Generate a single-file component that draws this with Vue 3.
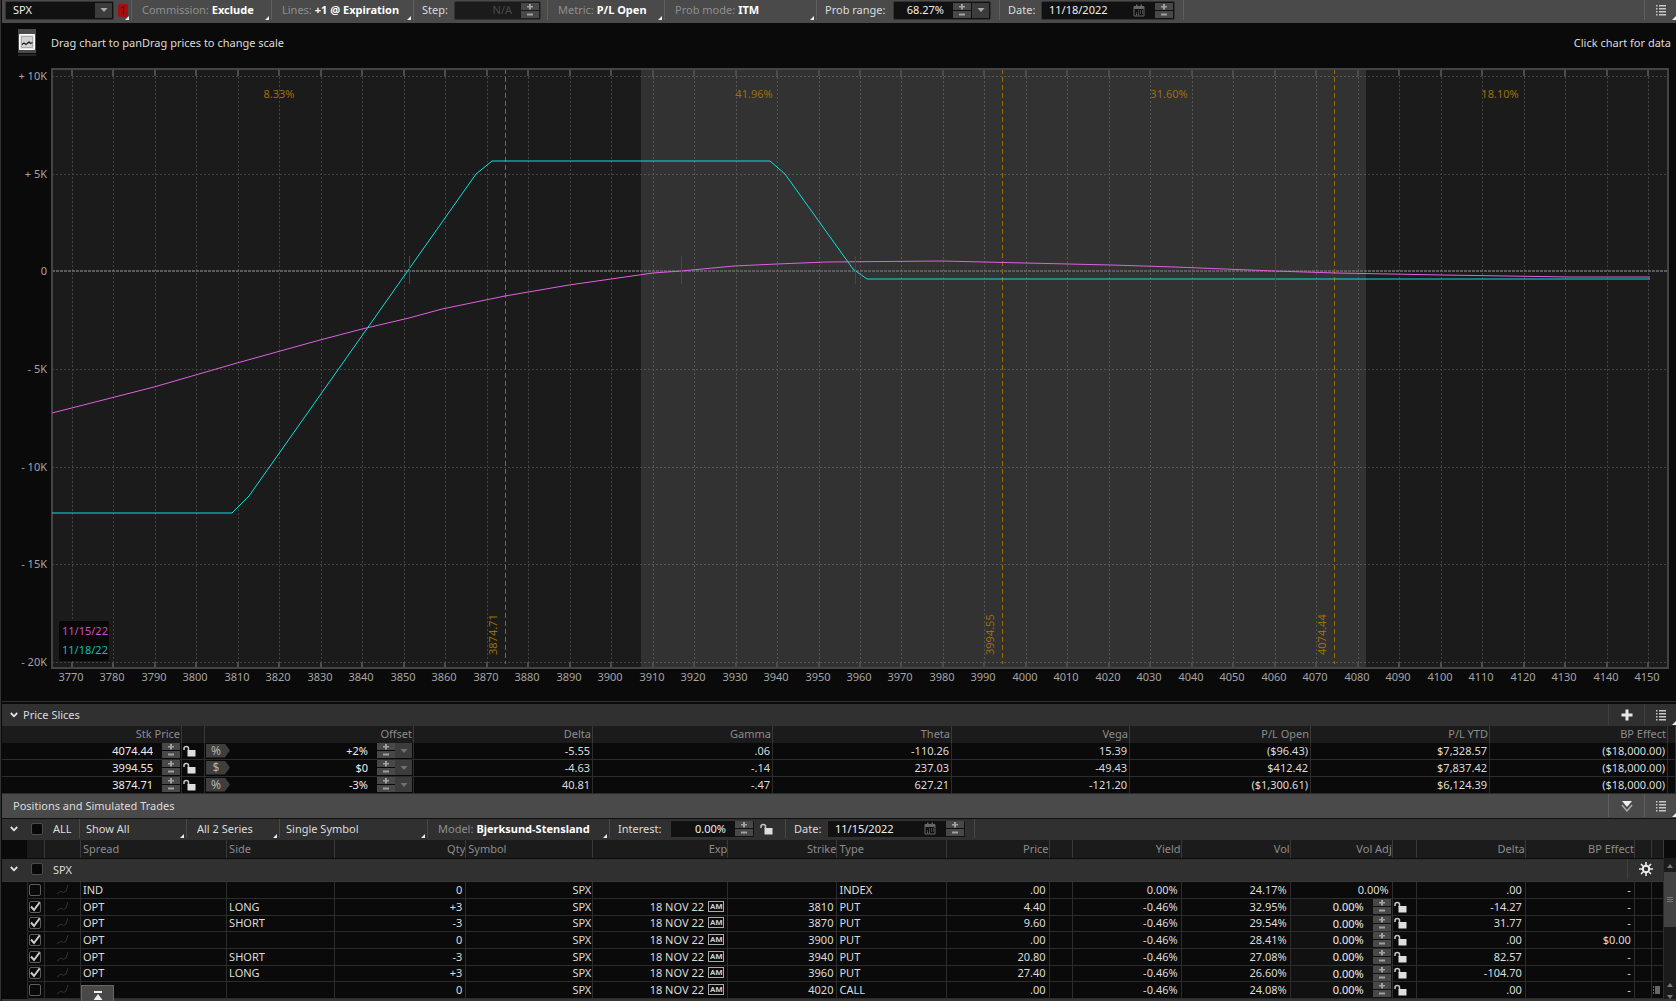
<script setup>
import { computed, onBeforeUnmount, onMounted, ref } from 'vue'

const chart = ref(null)
const size = ref({ w: 1674, h: 637 })
let observer

onMounted(() => {
  const measure = () => {
    const box = chart.value.getBoundingClientRect()
    size.value = { w: Math.round(box.width), h: Math.round(box.height) }
  }
  observer = new ResizeObserver(measure)
  observer.observe(chart.value)
  measure()
})
onBeforeUnmount(() => observer?.disconnect())

const plot = computed(() => ({
  left: 50,
  right: size.value.w - 8,
  top: 6,
  bottom: size.value.h - 32,
}))

const minPrice = 3765.2
const priceSpan = 389.6
const x = (price) => {
  const p = plot.value
  return Math.round(p.left + ((price - minPrice) / priceSpan) * (p.right - p.left))
}
const y = (value) => {
  const p = plot.value
  const top = p.top + 7
  const bottom = p.bottom - 6
  return Math.round(top + ((10000 - value) / 30000) * (bottom - top))
}
const path = (points) => points.map(([p, v]) => `${x(p)},${y(v)}`).join(' ')

const prices = Array.from({ length: 39 }, (_, i) => 3770 + i * 10)
const levels = [
  [10000, '+ 10K'], [5000, '+ 5K'], [0, '0'], [-5000, '- 5K'],
  [-10000, '- 10K'], [-15000, '- 15K'], [-20000, '- 20K'],
]
const expiration = [
  [3765.2, -12385], [3808.6, -12385], [3812.7, -11515], [3867.5, 4990], [3871.3, 5630],
  [3938.4, 5630], [3942, 4965], [3957.2, 460], [3958.4, 100], [3961.6, -410], [4150.5, -410],
]
const today = [
  [3765.2, -7267], [3789.8, -5900], [3809.9, -4700], [3829.8, -3520], [3839.9, -2940],
  [3851.3, -2380], [3859.3, -1930], [3874.5, -1240], [3889.9, -710], [3900, -390],
  [3910.2, -110], [3916.9, 20], [3929.7, 280], [3940, 370], [3951.9, 500], [3980, 510],
  [3989.6, 460], [4020.6, 330], [4036, 215], [4059.8, 30], [4074.7, -70], [4100.5, -180],
  [4131.4, -300], [4150.5, -300],
]
const breakevens = [3851.3, 3916.9, 3958.9, 4060]
const slicesAt = [3874.71, 3994.55, 4074.44]
const odds = [[3820, '8.33%'], [3934.4, '41.96%'], [4034.4, '31.60%'], [4114.4, '18.10%']]

const slices = [
  { price: '4074.44', unit: '%', offset: '+2%', cells: ['-5.55', '.06', '-110.26', '15.39', '($96.43)', '$7,328.57', '($18,000.00)'] },
  { price: '3994.55', unit: '$', offset: '$0', cells: ['-4.63', '-.14', '237.03', '-49.43', '$412.42', '$7,837.42', '($18,000.00)'] },
  { price: '3874.71', unit: '%', offset: '-3%', cells: ['40.81', '-.47', '627.21', '-121.20', '($1,300.61)', '$6,124.39', '($18,000.00)'] },
]
const sliceHeads = ['Delta', 'Gamma', 'Theta', 'Vega', 'P/L Open', 'P/L YTD', 'BP Effect']
const sliceCols = [180, 23, 209, 179, 180, 179, 178, 181, 179, 178, 8]

const posCols = [26, 17, 36, 146, 108, 131, 127, 135, 109, 109, 103, 23, 109, 109, 102, 24, 109, 109, 17, 12]
const trades = [
  { on: false, kind: 'IND', side: '', qty: '0', exp: '', strike: '', type: 'INDEX', price: '.00', yld: '0.00%', vol: '24.17%', delta: '.00', bp: '-' },
  { on: true, kind: 'OPT', side: 'LONG', qty: '+3', exp: '18 NOV 22', strike: '3810', type: 'PUT', price: '4.40', yld: '-0.46%', vol: '32.95%', delta: '-14.27', bp: '-' },
  { on: true, kind: 'OPT', side: 'SHORT', qty: '-3', exp: '18 NOV 22', strike: '3870', type: 'PUT', price: '9.60', yld: '-0.46%', vol: '29.54%', delta: '31.77', bp: '-' },
  { on: true, kind: 'OPT', side: '', qty: '0', exp: '18 NOV 22', strike: '3900', type: 'PUT', price: '.00', yld: '-0.46%', vol: '28.41%', delta: '.00', bp: '$0.00' },
  { on: true, kind: 'OPT', side: 'SHORT', qty: '-3', exp: '18 NOV 22', strike: '3940', type: 'PUT', price: '20.80', yld: '-0.46%', vol: '27.08%', delta: '82.57', bp: '-' },
  { on: true, kind: 'OPT', side: 'LONG', qty: '+3', exp: '18 NOV 22', strike: '3960', type: 'PUT', price: '27.40', yld: '-0.46%', vol: '26.60%', delta: '-104.70', bp: '-' },
  { on: false, kind: '', side: '', qty: '0', exp: '18 NOV 22', strike: '4020', type: 'CALL', price: '.00', yld: '-0.46%', vol: '24.08%', delta: '.00', bp: '-' },
]
</script>

<template>
  <div class="app">
    <svg class="defs" aria-hidden="true">
      <symbol id="i-plus" viewBox="0 0 8 7"><path d="M3 1h2v2h2v1.500H5v2H3v-2H1V3h2z" fill="#a0a0a0" /></symbol>
      <symbol id="i-minus" viewBox="0 0 8 7"><path d="M1 2.500h6v2H1z" fill="#a0a0a0" /></symbol>
      <symbol id="i-down" viewBox="0 0 8 6"><path d="M0.500 1h7L4 5z" fill="currentColor" /></symbol>
      <symbol id="i-lock" viewBox="0 0 14 12">
        <path d="M1 5V3.500C1 0.800 5.500 0.800 5.500 3.500V6" fill="none" stroke="#c8c8c8" stroke-width="1.500" />
        <path d="M4.500 5h8v6.500h-8z" fill="#dedede" />
      </symbol>
      <symbol id="i-cal" viewBox="0 0 12 13">
        <path d="M1 2.500h10v9.500H1z" fill="none" stroke="#666" />
        <path d="M1 2h10v3H1zM3 0.500h1.500v2H3zM7.500 0.500H9v2H7.500z" fill="#666" />
        <path d="M5 6.500h1v1H5zM7 6.500h1v1H7zM9 6.500h1v1H9zM3 8.500h1v1H3zM5 8.500h1v1H5zM7 8.500h1v1H7zM9 8.500h1v1H9zM3 10.300h1v1H3zM5 10.300h1v1H5z" fill="#777" />
      </symbol>
      <symbol id="i-list" viewBox="0 0 12 12">
        <path d="M1 1h1.500v1.500H1zM1 4h1.500v1.500H1zM1 7h1.500v1.500H1zM1 10h1.500v1.500H1zM4 1h7v1.500H4zM4 4h7v1.500H4zM4 7h7v1.500H4zM4 10h7v1.500H4z" fill="#c8c8c8" />
      </symbol>
      <symbol id="i-chev" viewBox="0 0 8 6"><path d="M0.800 1L4 4.300L7.200 1" fill="none" stroke="#e4e4e4" stroke-width="1.800" /></symbol>
      <symbol id="i-spark" viewBox="0 0 14 12"><path d="M1 10l4-3 2.500 1.500L10 7l2-6" fill="none" stroke="#333" /></symbol>
    </svg>

    <header class="bar top">
      <div class="cell c-symbol">
        <span class="field symbol">
          <input type="text" value="SPX" aria-label="Symbol">
          <button class="drop" aria-label="Symbols"><svg width="8" height="6"><use href="#i-down" /></svg></button>
        </span>
        <button class="badge">1</button>
        <i class="corner"></i>
      </div>
      <div class="cell menu w140"><label for="commission">Commission:</label><select id="commission" class="strong"><option>Exclude</option></select><i class="corner"></i></div>
      <div class="cell menu w142"><label for="lines">Lines:</label><select id="lines" class="strong"><option>+1 @ Expiration</option></select><i class="corner"></i></div>
      <div class="cell w134">
        <label for="step">Step:</label>
        <span class="field off step"><input id="step" type="text" value="N/A" disabled>
          <span class="spin"><button aria-label="Step up" disabled><svg><use href="#i-plus" /></svg></button><button aria-label="Step down" disabled><svg><use href="#i-minus" /></svg></button></span>
        </span>
      </div>
      <div class="cell menu w117"><label for="metric">Metric:</label><select id="metric" class="strong"><option>P/L Open</option></select><i class="corner"></i></div>
      <div class="cell menu w152"><label for="probmode">Prob mode:</label><select id="probmode" class="strong"><option>ITM</option></select><i class="corner"></i></div>
      <div class="cell w183">
        <label for="range">Prob range:</label>
        <span class="field range"><input id="range" type="text" value="68.27%">
          <span class="spin"><button aria-label="Range up"><svg><use href="#i-plus" /></svg></button><button aria-label="Range down"><svg><use href="#i-minus" /></svg></button></span>
          <button class="drop" aria-label="Ranges"><svg width="8" height="6"><use href="#i-down" /></svg></button>
        </span>
      </div>
      <div class="cell w184">
        <label for="date1">Date:</label>
        <span class="field date"><input id="date1" type="text" value="11/18/2022">
          <svg class="cal" width="12" height="13"><use href="#i-cal" /></svg>
          <span class="spin"><button aria-label="Next day"><svg><use href="#i-plus" /></svg></button><button aria-label="Previous day"><svg><use href="#i-minus" /></svg></button></span>
        </span>
      </div>
      <span class="grow"></span>
      <button class="tool" aria-label="Chart options"><svg width="12" height="12"><use href="#i-list" /></svg><i class="corner"></i></button>
    </header>

    <div class="hint">
      <button class="snap" aria-label="Chart style">
        <svg width="18" height="27" viewBox="0 0 18 27">
          <path d="M0 0h18v24H0z" fill="#4a4a4a" /><path d="M0 25h18v2H0z" fill="#242424" />
          <path d="M1.500 5.500h15v15h-15z" fill="#e4e4e4" stroke="#fff" />
          <path d="M3.500 7.500h11v11h-11z" fill="#d2d2d2" stroke="#aaa" />
          <path d="M4 15.500l2-1.500 2 1.500 3-2.500 1.500 1.500 2-1" fill="none" stroke="#222" stroke-width="1.300" />
        </svg>
      </button>
      <span>Drag chart to panDrag prices to change scale</span>
      <span class="grow"></span>
      <span>Click chart for data</span>
    </div>

    <svg ref="chart" class="chart" role="img" aria-label="Profit and loss by underlying price">
      <rect :x="plot.left" :y="plot.top" :width="plot.right - plot.left" :height="plot.bottom - plot.top" fill="#1b1b1b" />
      <g class="grid">
        <line v-for="p in prices" :key="p" :x1="x(p)" :x2="x(p)" :y1="plot.top" :y2="plot.bottom" />
        <template v-for="[v] in levels" :key="v">
          <line v-if="v" :x1="plot.left" :x2="plot.right" :y1="y(v)" :y2="y(v)" />
        </template>
      </g>
      <rect :x="x(3907.2)" :y="plot.top" :width="x(4082) - x(3907.2)" :height="plot.bottom - plot.top" fill="#fff" fill-opacity="0.1" />
      <g class="ticks">
        <template v-for="p in prices" :key="p">
          <line :x1="x(p)" :x2="x(p)" :y1="plot.top" :y2="plot.top + 7" />
          <line :x1="x(p)" :x2="x(p)" :y1="plot.bottom - 6" :y2="plot.bottom" />
        </template>
      </g>
      <line class="zero" :x1="plot.left" :x2="plot.right" :y1="y(0)" :y2="y(0)" />
      <line v-for="s in slicesAt" :key="s" class="slice" :x1="x(s) - 1" :x2="x(s) - 1" :y1="plot.top" :y2="plot.bottom - 4" />
      <rect class="frame" :x="plot.left" :y="plot.top" :width="plot.right - plot.left" :height="plot.bottom - plot.top" />
      <polyline class="today" :points="path(today)" />
      <polyline class="expiration" :points="path(expiration)" />
      <line v-for="b in breakevens" :key="b" class="even" :x1="x(b)" :x2="x(b)" :y1="y(0) - 15" :y2="y(0) + 13" />
      <text v-for="[p, t] in odds" :key="t" class="gold mid" :x="x(p)" :y="plot.top + 29">{{ t }}</text>
      <text v-for="s in slicesAt" :key="s" class="gold" :transform="`translate(${x(s) - 9} ${plot.bottom - 13}) rotate(-90)`">{{ s.toFixed(2) }}</text>
      <text v-for="p in prices" :key="p" class="axis mid" :x="x(p) - 1" :y="plot.bottom + 13">{{ p }}</text>
      <text v-for="[v, t] in levels" :key="t" class="axis end" :x="plot.left - 5" :y="y(v) + 4">{{ t }}</text>
      <rect :x="plot.left + 7" :y="plot.bottom - 47" width="50" height="40" rx="2" fill="#080808" />
      <text :x="plot.left + 10" :y="plot.bottom - 33" fill="#c850c8">11/15/22</text>
      <text :x="plot.left + 10" :y="plot.bottom - 14" fill="#12b8b8">11/18/22</text>
    </svg>

    <section class="slices">
      <h2 class="bar dim">
        <button class="fold" aria-label="Collapse"><svg width="8" height="6"><use href="#i-chev" /></svg></button>Price Slices
        <span class="grow"></span>
        <button class="tool wide" aria-label="Add slice"><svg width="12" height="12"><path d="M4.500 0.500h3v4h4v3h-4v4h-3v-4h-4v-3h4z" fill="#e8e8e8" /></svg></button>
        <button class="tool" aria-label="Slice options"><svg width="12" height="12"><use href="#i-list" /></svg><i class="corner"></i></button>
      </h2>
      <table>
        <colgroup><col v-for="(w, i) in sliceCols" :key="i" :style="{ width: w + 'px' }"></colgroup>
        <thead>
          <tr><th>Stk Price</th><th></th><th>Offset</th><th v-for="t in sliceHeads" :key="t">{{ t }}</th><th></th></tr>
        </thead>
        <tbody>
          <tr v-for="s in slices" :key="s.price">
            <td class="edit">
              <span class="line"><input type="text" :value="s.price" aria-label="Stock price">
                <span class="spin"><button aria-label="Up"><svg><use href="#i-plus" /></svg></button><button aria-label="Down"><svg><use href="#i-minus" /></svg></button></span></span>
            </td>
            <td class="mini"><button class="lock" aria-label="Lock price"><svg width="14" height="12"><use href="#i-lock" /></svg></button></td>
            <td class="edit">
              <span class="line"><button class="tag">{{ s.unit }}</button><input type="text" :value="s.offset" aria-label="Offset">
                <span class="spin"><button aria-label="Up"><svg><use href="#i-plus" /></svg></button><button aria-label="Down"><svg><use href="#i-minus" /></svg></button></span>
                <button class="drop faint" aria-label="Offsets"><svg width="8" height="6"><use href="#i-down" /></svg></button></span>
            </td>
            <td v-for="(c, i) in s.cells" :key="i">{{ c }}</td>
            <td></td>
          </tr>
        </tbody>
      </table>
    </section>

    <section class="positions">
      <h2 class="bar lit">
        Positions and Simulated Trades
        <span class="grow"></span>
        <button class="tool wide" aria-label="Expand"><svg width="12" height="12"><path d="M1 1h10L6 7z" fill="#f0f0f0" /><path d="M1 5l5 6 5-6" fill="none" stroke="#aaa" stroke-width="1.500" /></svg></button>
        <button class="tool" aria-label="Position options"><svg width="12" height="12"><use href="#i-list" /></svg><i class="corner"></i></button>
      </h2>
      <div class="bar filters">
        <div class="cell w78"><button class="fold" aria-label="Collapse all"><svg width="8" height="6"><use href="#i-chev" /></svg></button><input id="all" type="checkbox" class="solid"><label for="all">ALL</label></div>
        <div class="cell menu near w107"><select aria-label="Show"><option>Show All</option></select><i class="corner"></i></div>
        <div class="cell menu w93"><select aria-label="Series"><option>All 2 Series</option></select><i class="corner"></i></div>
        <div class="cell menu near w148"><select aria-label="Grouping"><option>Single Symbol</option></select><i class="corner"></i></div>
        <div class="cell menu w182"><label for="model">Model:</label><select id="model" class="strong"><option>Bjerksund-Stensland</option></select><i class="corner"></i></div>
        <div class="cell w176">
          <label for="interest">Interest:</label>
          <span class="field interest"><input id="interest" type="text" value="0.00%">
            <span class="spin"><button aria-label="Interest up"><svg><use href="#i-plus" /></svg></button><button aria-label="Interest down"><svg><use href="#i-minus" /></svg></button></span>
          </span>
          <button class="lock" aria-label="Lock interest"><svg width="14" height="12"><use href="#i-lock" /></svg></button>
        </div>
        <div class="cell w189">
          <label for="date2">Date:</label>
          <span class="field date"><input id="date2" type="text" value="11/15/2022">
            <svg class="cal" width="12" height="13"><use href="#i-cal" /></svg>
            <span class="spin"><button aria-label="Next day"><svg><use href="#i-plus" /></svg></button><button aria-label="Previous day"><svg><use href="#i-minus" /></svg></button></span>
          </span>
        </div>
      </div>
      <div class="book">
        <table>
          <colgroup><col v-for="(w, i) in posCols" :key="i" :style="{ width: w + 'px' }"></colgroup>
          <thead>
            <tr>
              <th class="blank"></th><th></th><th></th><th class="l">Spread</th><th class="l">Side</th><th>Qty</th><th class="l">Symbol</th><th>Exp</th><th>Strike</th><th class="l">Type</th><th>Price</th><th></th><th>Yield</th><th>Vol</th><th>Vol Adj</th><th></th><th>Delta</th><th>BP Effect</th><th></th><th></th>
            </tr>
          </thead>
          <tbody>
            <tr class="group">
              <td colspan="20">
                <div class="line">
                  <button class="fold" aria-label="Collapse SPX"><svg width="8" height="6"><use href="#i-chev" /></svg></button><input id="spx" type="checkbox" class="solid"><label for="spx">SPX</label>
                  <span class="grow"></span>
                  <button class="tool" aria-label="Settings">
                    <svg width="14" height="14" viewBox="0 0 14 14"><circle cx="7" cy="7" r="3.200" fill="none" stroke="#ececec" stroke-width="2" /><path d="M7 0v3M7 11v3M0 7h3M11 7h3M2 2l2.200 2.200M9.800 9.800L12 12M12 2L9.800 4.200M4.200 9.800L2 12" stroke="#ececec" stroke-width="1.600" /></svg>
                  </button>
                </div>
              </td>
            </tr>
            <tr v-for="(t, i) in trades" :key="i" class="trade">
              <td class="blank"></td>
              <td class="mini"><input type="checkbox" :checked="t.on" aria-label="Include"></td>
              <td class="mini c"><svg width="14" height="12"><use href="#i-spark" /></svg></td>
              <td class="l">{{ t.kind }}</td>
              <td class="l">{{ t.side }}</td>
              <td>{{ t.qty }}</td>
              <td class="sym">SPX</td>
              <td><span class="line end">{{ t.exp }}<b v-if="t.exp" class="am">AM</b></span></td>
              <td>{{ t.strike }}</td>
              <td class="l">{{ t.type }}</td>
              <td>{{ t.price }}</td>
              <td></td>
              <td>{{ t.yld }}</td>
              <td>{{ t.vol }}</td>
              <td v-if="i === 0">0.00%</td>
              <td v-else class="edit adj">
                <span class="line"><input type="text" value="0.00%" aria-label="Volatility adjustment">
                  <span class="spin"><button aria-label="Up"><svg><use href="#i-plus" /></svg></button><button aria-label="Down"><svg><use href="#i-minus" /></svg></button></span></span>
              </td>
              <td class="mini"><button v-if="i" class="lock" aria-label="Lock volatility"><svg width="14" height="12"><use href="#i-lock" /></svg></button></td>
              <td>{{ t.delta }}</td>
              <td>{{ t.bp }}</td>
              <td></td>
              <td class="mini"><svg v-if="i === 6" width="8" height="8"><path d="M0 0h1v2H0zM0 3h1v2H0zM0 6h1v2H0zM2 0h5v8H2z" fill="#666" /></svg></td>
            </tr>
          </tbody>
        </table>
        <div class="scroll">
          <svg width="6" height="4"><path d="M0 4l3-4 3 4z" fill="#777" /></svg>
          <span class="thumb"><i></i><i></i><i></i></span>
          <span class="grow"></span>
          <svg width="6" height="4"><path d="M0 4l3-4 3 4z" fill="#777" /></svg>
          <svg width="6" height="4"><path d="M0 0l3 4 3-4z" fill="#777" /></svg>
        </div>
      </div>
      <div class="rim"></div>
      <button class="raise" aria-label="Raise panel"><svg width="10" height="10"><path d="M1 0h8v2H1zM5 3l4.500 6h-9z" fill="#eee" /></svg></button>
    </section>
  </div>
</template>

<style>
html,
body {
  background: #0a0a0a;
}
</style>

<style scoped>
.app {
  display: flex;
  flex-direction: column;
  height: 100vh;
  box-sizing: border-box;
  padding-left: 2px;
  overflow: hidden;
  background: #0a0a0a;
  color: #dcdcdc;
  font: 11px/16px "Noto Sans", "Open Sans", sans-serif;
  box-shadow: inset 1px 0 #333;
}
.defs { position: absolute; width: 0; height: 0; }
button, input, select {
  appearance: none;
  margin: 0;
  padding: 0;
  border: 0;
  border-radius: 0;
  background: none;
  color: inherit;
  font: inherit;
  min-width: 0;
}
button { display: flex; align-items: center; justify-content: center; flex: none; }
svg { display: block; flex: none; }
h2 { margin: 0; font: inherit; }
.grow { flex: 1; }

.bar { display: flex; align-items: stretch; flex: none; box-sizing: border-box; white-space: nowrap; }
.top { height: 23px; background: #4a4a4a; padding-bottom: 3px; }
.cell {
  position: relative;
  display: flex;
  align-items: center;
  flex: none;
  box-sizing: border-box;
  padding-left: 8px;
  border-right: 1px solid #5e5e5e;
}
.menu { padding-left: 10px; }
.near { padding-left: 6px; }
.menu label { color: #8e8e8e; }
.menu label + select { margin-left: 3px; }
.menu select { flex: 1; }
.strong { font-weight: 700; color: #fff; }
.c-symbol { width: 130px; padding-left: 3px; gap: 4px; }
.w78 { width: 78px; padding-left: 0; }
.w93 { width: 93px; }
.w107 { width: 107px; }
.w117 { width: 117px; }
.w134 { width: 134px; }
.w140 { width: 140px; }
.w142 { width: 142px; }
.w148 { width: 148px; }
.w152 { width: 152px; }
.w176 { width: 176px; }
.w182 { width: 182px; }
.w183 { width: 183px; }
.w184 { width: 184px; }
.w189 { width: 189px; }
.corner {
  position: absolute;
  right: 2px;
  bottom: 0;
  width: 4px;
  height: 4px;
  background: #eee;
  clip-path: polygon(100% 0, 100% 100%, 0 100%);
}
.field {
  display: flex;
  align-items: center;
  gap: 1px;
  box-sizing: border-box;
  height: 19px;
  padding: 0 1px;
  border: 1px solid #333;
  border-radius: 2px;
  background: #111;
  color: #eee;
}
.field input { flex: 1; width: 0; }
.symbol { width: 109px; }
.symbol input { padding-left: 6px; }
.off { background: #1b1b1b; color: #4a4a4a; }
.step { width: 87px; margin-left: auto; margin-right: 6px; }
.range { width: 98px; margin-left: auto; margin-right: 8px; }
.interest { width: 85px; margin-left: auto; }
.step input, .range input, .interest input { text-align: right; padding-right: 8px; }
.date { width: 134px; margin-left: auto; margin-right: 8px; }
.date input { padding-left: 6px; }
.date .cal { margin-right: 9px; }
.filters .date { width: 139px; }
.badge { width: 10px; height: 13px; border-radius: 2px; background: #a30f0f; color: #4a1010; }
.drop { width: 17px; height: 15px; background: #3c3c3c; color: #a8a8a8; }
.drop.faint { color: #707070; }
.spin { display: flex; flex-direction: column; flex: none; gap: 1px; width: 18px; }
.spin button { height: 7px; background: #484848; }
.spin svg { width: 8px; height: 7px; }
.tool {
  position: relative;
  width: 32px;
  border-left: 1px solid #5e5e5e;
}
.tool .corner { right: 0; }
.tool.wide { width: 36px; }
.lock { width: 14px; height: 12px; }

.hint { display: flex; align-items: center; flex: none; box-sizing: border-box; height: 40px; padding: 0 5px 1px 16px; }
.snap { margin-right: 15px; }

.chart { flex: 1 1 0; width: 100%; min-height: 200px; font-size: 11px; cursor: crosshair; }
.grid line { stroke: #434343; stroke-width: 1; stroke-dasharray: 2 2; shape-rendering: crispEdges; }
.ticks line { stroke: #4c4c4c; stroke-width: 2; shape-rendering: crispEdges; }
.zero { stroke: #5c5c5c; stroke-width: 2; stroke-dasharray: 3 1; shape-rendering: crispEdges; }
.frame { fill: none; stroke: #444; stroke-width: 2; }
.slice { stroke: #946a06; stroke-width: 1; stroke-dasharray: 5 3; shape-rendering: crispEdges; }
.today, .expiration { fill: none; stroke-width: 1; }
.today { stroke: #e060e0; }
.expiration { stroke: #14dcdc; }
.even { stroke: #e00; stroke-width: 1; shape-rendering: crispEdges; }
.gold { fill: #9c7004; }
.axis { fill: #a4a4a4; }
.mid { text-anchor: middle; }
.end { text-anchor: end; }

.slices { flex: none; margin-top: 1px; border-top: 1px solid #303030; padding-top: 2px; }
.dim { height: 22px; background: #303030; align-items: center; }
.lit { height: 24px; background: #4a4a4a; align-items: center; padding-left: 11px; }
.dim, .lit { padding-bottom: 1px; }
.bar > .tool { height: auto; align-self: stretch; }
.dim .tool, .group .tool { border-color: #404040; }
.fold { width: 21px; height: 16px; padding-left: 2px; box-sizing: border-box; }

table { width: 100%; table-layout: fixed; border-collapse: separate; border-spacing: 0; }
th, td {
  box-sizing: border-box;
  height: 17px;
  padding: 0 3px 2px;
  border-right: 1px solid #2c2c2c;
  text-align: right;
  font-weight: 400;
  line-height: 13px;
  white-space: nowrap;
  overflow: hidden;
}
th { padding: 0 0 2px; background: #1b1b1b; border-color: #383838; color: #8c8c8c; }
td { border-bottom: 1px solid #2c2c2c; }
.slices th { padding-right: 1px; }
.slices td { padding-right: 2px; }
th.l, td.l { text-align: left; padding-left: 2px; }
td.mini { padding: 0 1px 1px; }
td.c svg { margin: 0 auto; }
.line { display: flex; align-items: center; height: 15px; }
.line input[type="text"] { flex: 1; width: 0; height: 14px; text-align: right; padding-right: 9px; color: #ececec; }
td.edit { padding: 0 1px 1px; }
.slices td.edit { padding-right: 1px; }
.line.end { justify-content: flex-end; gap: 4px; height: 13px; }
.tag {
  width: 24px;
  height: 14px;
  padding-right: 4px;
  background: #3e3e3e;
  color: #b0b0b0;
  font-size: 12px;
  clip-path: polygon(0 0, 78% 0, 100% 50%, 78% 100%, 0 100%);
}

.positions { position: relative; flex: none; }
.filters { height: 22px; padding-bottom: 2px; border-top: 1px solid #111; background: #303030; }
.filters .cell { border-color: #484848; }
.filters .field { height: 18px; }
.filters .lock { margin: 0 11px 0 5px; }
input[type="checkbox"] {
  flex: none;
  display: block;
  box-sizing: border-box;
  width: 12px;
  height: 12px;
  border: 1px solid #5c5c5c;
  border-radius: 2px;
}
input[type="checkbox"]:checked {
  background: url("data:image/svg+xml,%3Csvg xmlns='http://www.w3.org/2000/svg' viewBox='0 0 12 12'%3E%3Cpath d='M2 5.500L5 9L11 1' fill='none' stroke='%23ccc' stroke-width='2'/%3E%3C/svg%3E") center / 12px 12px no-repeat;
}
input[type="checkbox"].solid { margin: 0 10px 0 8px; background: #080808; border-color: #4c4c4c; }
.book { display: flex; }
.book th { height: 18px; }
.book th.blank { background: #0a0a0a; border-color: #1b1b1b; }
.book td.blank { border-bottom-color: #0a0a0a; }
.group td { height: 24px; padding: 0; border-top: 1px solid #0a0a0a; border-bottom: 1px solid #383838; background: #303030; }
.group .line { height: 22px; box-sizing: border-box; padding-bottom: 2px; }
.group .tool { height: 20px; width: 36px; }
.trade:nth-child(3n + 1) td { height: 16px; }
.trade:nth-child(3n + 1) .edit .line { height: 14px; }
.sym { padding-right: 1px; }
.adj { background: #111; }
.am {
  box-sizing: border-box;
  height: 11px;
  padding: 0 1px;
  border: 1px solid #aaa;
  color: #ccc;
  font: 700 8px/9px Roboto, sans-serif;
}
.scroll {
  display: flex;
  flex: none;
  flex-direction: column;
  align-items: center;
  gap: 8px;
  box-sizing: border-box;
  width: 12px;
  margin-top: 18px;
  padding: 6px 0 0;
  background: #1b1b1b;
}
.thumb {
  display: flex;
  flex-direction: column;
  align-items: center;
  justify-content: center;
  gap: 1px;
  width: 12px;
  height: 55px;
  margin-top: -4px;
  background: #424242;
}
.thumb i { width: 6px; height: 1px; background: #777; }
.rim { height: 2px; background: #363636; }
.raise {
  position: absolute;
  left: 79px;
  bottom: 0;
  width: 33px;
  height: 16px;
  align-items: flex-end;
  border: 1px solid #666;
  border-bottom: 0;
  background: #484848;
}
</style>
